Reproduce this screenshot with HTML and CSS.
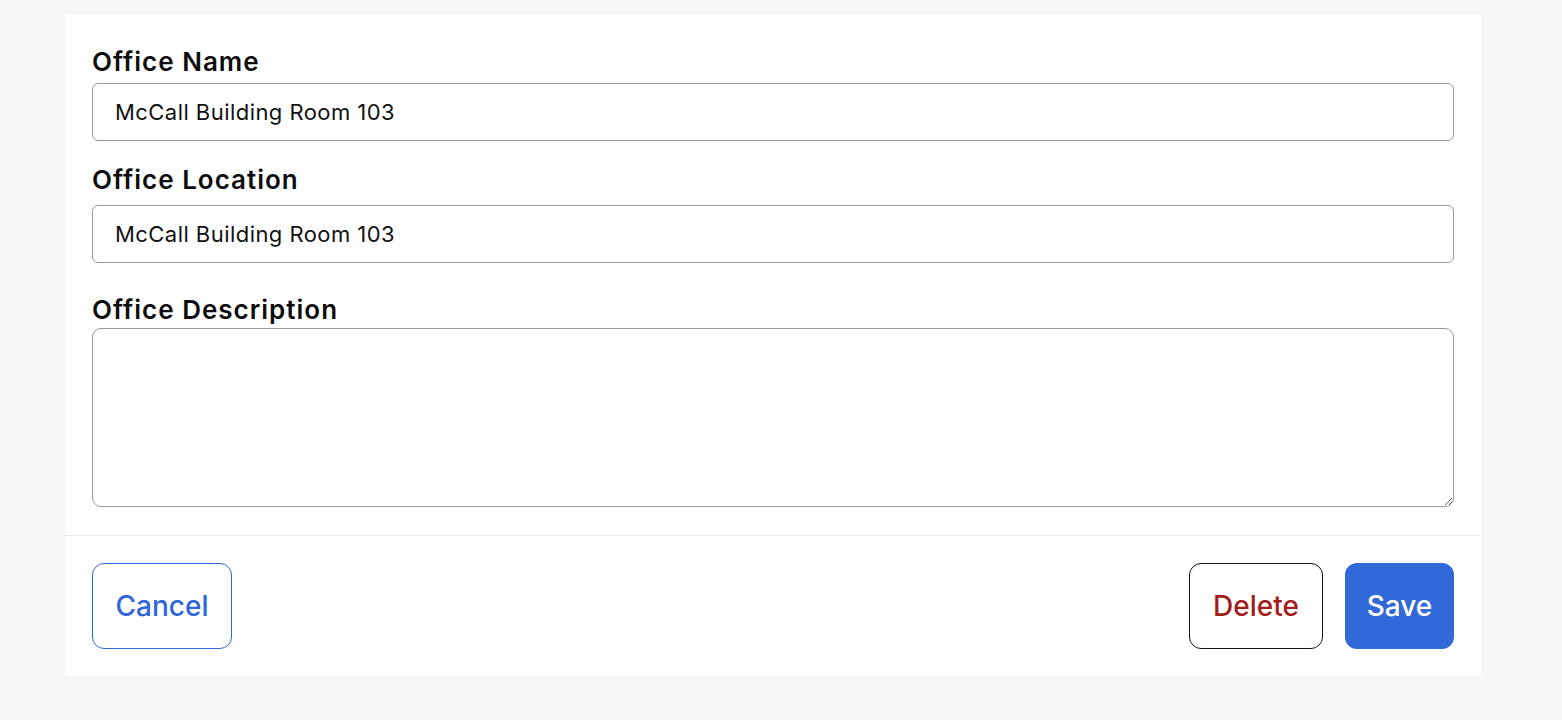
FILE: index.html
```html
<!DOCTYPE html>
<html lang="en">
<head>
<meta charset="utf-8">
<title>Edit Office</title>
<link rel="stylesheet" href="styles.css">
</head>
<body>
<div class="card">
  <div class="form">
    <label class="label label-name" for="name">Office Name</label>
    <input class="input input-name" id="name" type="text" value="McCall Building Room 103">
    <label class="label label-location" for="location">Office Location</label>
    <input class="input input-location" id="location" type="text" value="McCall Building Room 103">
    <label class="label label-desc" for="desc">Office Description</label>
    <textarea class="textarea" id="desc"></textarea>
  </div>
  <div class="footer">
    <button class="btn btn-cancel" type="button">Cancel</button>
    <div class="actions">
      <button class="btn btn-delete" type="button">Delete</button>
      <button class="btn btn-save" type="button">Save</button>
    </div>
  </div>
</div>
</body>
</html>
```

FILE: styles.css
```css
html, body {
  margin: 0;
  padding: 0;
  background: #f6f6f6;
}

body {
  font-family: Inter, "Noto Sans", sans-serif;
  color: #111;
}

.card {
  margin: 15px 0 0 65px;
  width: 1416px;
  background: #ffffff;
}

.form {
  display: flex;
  flex-direction: column;
  padding: 31px 27px 28px 27px;
  border-bottom: 1px solid #ebebeb;
}

.label {
  display: block;
  font-size: 26px;
  line-height: 32px;
  font-weight: 600;
  letter-spacing: 1px;
  color: #0d0d0d;
}

.label-name { margin-bottom: 5px; }
.label-location { margin-top: 23px; margin-bottom: 9px; }
.label-desc { margin-top: 31px; margin-bottom: 2px; }

.input,
.textarea {
  box-sizing: border-box;
  display: block;
  width: 100%;
  border: 1px solid #999999;
  background: #fff;
  font-family: Inter, "Noto Sans", sans-serif;
  font-size: 22px;
  letter-spacing: 0.45px;
  color: #111;
  margin: 0;
  outline: none;
}

.input {
  height: 58px;
  border-radius: 6px;
  padding: 0 22px;
}

.textarea {
  height: 179px;
  border-radius: 9px;
  padding: 14px 22px;
  resize: vertical;
}

.footer {
  display: flex;
  justify-content: space-between;
  align-items: center;
  padding: 27px;
}

.actions {
  display: flex;
  gap: 22px;
}

.btn {
  box-sizing: border-box;
  height: 86px;
  border-radius: 12px;
  font-family: Inter, "Noto Sans", sans-serif;
  font-size: 28px;
  font-weight: 500;
  padding: 0;
  cursor: pointer;
  background: #fff;
}

.btn-cancel {
  width: 140px;
  border: 1px solid #2f66d9;
  color: #2f66d9;
}

.btn-delete {
  width: 134px;
  border: 1px solid #111;
  color: #a21d1d;
}

.btn-save {
  width: 109px;
  border: none;
  background: #3169d9;
  color: #ffffff;
}
```
